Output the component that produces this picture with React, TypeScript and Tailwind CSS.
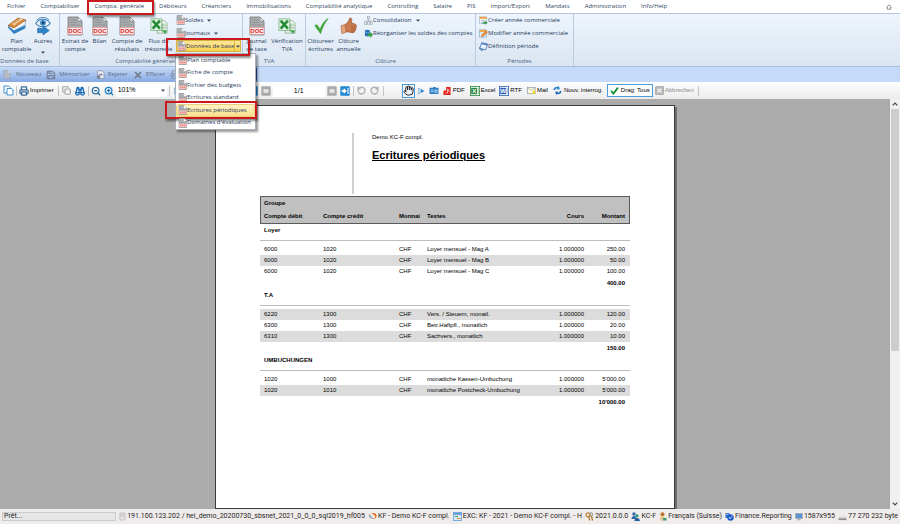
import type { ReactNode } from 'react';
import { Binoculars, Copy, Hand, Printer, RotateCcw, RotateCw, Save, X, ZoomIn, ZoomOut } from 'lucide-react';

const tabs = [
  'Fichier', 'Comptabiliser', 'Compta. générale', 'Débiteurs', 'Créanciers', 'Immobilisations', 'Comptabilité analytique',
  'Controlling', 'Salaire', 'PIS', 'Import/Export', 'Mandats', 'Administration', 'Info/Help',
];

const menuItems = [
  'Plan comptable', 'Fiche de compte', 'Fichier des budgets', 'Ecritures standard', 'Ecritures périodiques', "Domaines d'évaluation",
];

const groups = [
  {
    name: 'Loyer',
    total: '400.00',
    rows: [
      ['6000', '1020', 'CHF', 'Loyer mensuel - Mag A', '1.000000', '250.00'],
      ['6000', '1020', 'CHF', 'Loyer mensuel - Mag B', '1.000000', '50.00'],
      ['6000', '1020', 'CHF', 'Loyer mensuel - Mag C', '1.000000', '100.00'],
    ],
    shaded: 1,
  },
  {
    name: 'T.A',
    total: '150.00',
    rows: [
      ['6220', '1300', 'CHF', 'Vers. / Steuern, monatl.', '1.000000', '120.00'],
      ['6300', '1300', 'CHF', 'Betr.Haftpfl., monatlich', '1.000000', '20.00'],
      ['6310', '1300', 'CHF', 'Sachvers., monatlich', '1.000000', '10.00'],
    ],
    shaded: 0,
  },
  {
    name: 'UMBUCHUNGEN',
    total: "10'000.00",
    rows: [
      ['1020', '1000', 'CHF', 'monatliche Kassen-Umbuchung', '1.000000', "5'000.00"],
      ['1020', '1010', 'CHF', 'monatliche Postcheck-Umbuchung', '1.000000', "5'000.00"],
    ],
    shaded: 1,
  },
];

/* ---------- icons ---------- */

const DocIcon = ({ className = '' }) => (
  <svg viewBox="0 0 20 20" className={`shrink-0 ${className}`}>
    <path d="M3 1h10l4 4v14H3z" fill="#a9abad" stroke="#77797c" strokeWidth=".8" />
    <path d="M13 1v4h4z" fill="#f4f4f4" stroke="#77797c" strokeWidth=".6" />
    <path d="M5 4h6M5 6.500h7M5 9h10" stroke="#8b8d90" strokeWidth=".8" />
    <rect x="3" y="11.500" width="14" height="7" fill="#fdeaea" stroke="#e07070" strokeWidth=".4" />
    <text x="10" y="17.300" textAnchor="middle" fontSize="6" fontWeight="700" fill="#d92b2b" fontFamily="Liberation Sans, sans-serif">DOC</text>
  </svg>
);

const MiniDocIcon = () => (
  <svg viewBox="0 0 9 10" className="h-[10px] w-[9px] shrink-0">
    <path d="M1 .5h5L8.500 3v6.500H1z" fill="#b4b6b8" stroke="#85878a" strokeWidth=".6" />
    <path d="M6 .5V3h2.500z" fill="#fff" />
    <path d="M2 3h3M2 4.500h5" stroke="#8b8d90" strokeWidth=".5" />
    <rect x="1" y="5.800" width="7.500" height="3.200" fill="#f6bdb8" />
    <path d="M2 7.400h5.500" stroke="#e8837c" strokeWidth="1.200" strokeDasharray="1.300 .7" />
  </svg>
);

const SheetIcon = () => (
  <svg viewBox="0 0 20 20" className="size-[18px]">
    <path d="M8 4h8l3 3v11H8z" fill="#e6efe7" stroke="#6fa277" strokeWidth=".7" />
    <path d="M10 9h8M10 12h8M10 15h8M14 7v10" stroke="#74b07c" strokeWidth=".8" />
    <path d="M1 2h12v13H1z" fill="#dff0df" stroke="#4d9a57" strokeWidth=".6" />
    <path d="M3 4l8 9M11 4l-8 9" stroke="#1f8b36" strokeWidth="2.800" />
    <path d="M14 15h5l-2.500 4z" fill="#3aa048" />
  </svg>
);

const ShipIcon = () => (
  <svg viewBox="0 0 20 20" className="size-[20px]">
    <path d="M1 10l6 5L18 8.500l1-4-5 2-12 3z" fill="#f5f8fb" stroke="#6c8db3" strokeWidth=".6" />
    <path d="M1 11.500l6 6.500L18 12.500l1-3.500L7 14.500 1 10z" fill="#2f80c3" />
    <path d="M1 9.500L11 2l8 2-12 8z" fill="#d98b3c" stroke="#8f5520" strokeWidth=".6" />
    <path d="M5 8l8-5.500 3 .8-8.500 5.900z" fill="#f6dcae" />
    <path d="M7 7.500l6-4M9 8.200l6-4" stroke="#b87735" strokeWidth=".6" />
  </svg>
);

const EyeIcon = () => (
  <svg viewBox="0 0 20 20" className="size-[18px]">
    <path d="M2 7c4-6 12-6 16 0-4 5-12 5-16 0z" fill="#f1f7fc" stroke="#3a7fb5" strokeWidth="1.200" />
    <circle cx="10" cy="6.500" r="3.200" fill="#3784bd" />
    <circle cx="10" cy="6.500" r="1.300" fill="#123c66" />
    <path d="M3 3.500C7-.5 13-.5 17 3.500" stroke="#3a7fb5" fill="none" />
    <path d="M4 12.500h6V10l7 5-7 5v-2.500H4z" fill="#2e83c9" stroke="#1c5f9c" strokeWidth=".6" />
  </svg>
);

const CheckIcon = () => (
  <svg viewBox="0 0 20 20" className="size-[18px]">
    <path d="M3 9.500l2.500-1L9 13.500C11 8 14 4 18 1.500 14 7 11.500 12 9.500 18.500z" fill="#3fae3a" stroke="#2a8429" strokeWidth=".5" />
  </svg>
);

const ThumbIcon = () => (
  <svg viewBox="0 0 20 20" className="size-[18px]">
    <path d="M5 9l4-3.500 2-4.500c2.500 0 2.500 2.500 1.500 5.500L17 8c2 .8 1.500 2.500.6 3 .8 1 .2 2.300-.6 2.500.5 1.200 0 2.200-1 2.300 0 1.300-.8 1.900-2 1.700L6 16z" fill="#c97a4e" stroke="#8e4a28" strokeWidth=".7" />
    <path d="M1 9.500L5.500 8.500 7 17l-5 1.500z" fill="#e3a27c" stroke="#9c5a36" strokeWidth=".6" />
    <path d="M12.500 10l4.500 1M12.500 12.700l4 .8M12 15l3.500.7" stroke="#8e4a28" strokeWidth=".6" />
  </svg>
);

const TreeIcon = () => (
  <svg viewBox="0 0 10 10" className="size-[9px] shrink-0" fill="#eceff2" stroke="#9aa3ad" strokeWidth=".7">
    <path d="M5 3v3M2 7V5.500h6V7" fill="none" />
    <rect x="3.700" y=".6" width="2.600" height="2.600" />
    <rect x=".6" y="6.600" width="2.400" height="2.600" />
    <rect x="3.800" y="6.600" width="2.400" height="2.600" />
    <rect x="7" y="6.600" width="2.400" height="2.600" />
  </svg>
);

const DatabaseArrowIcon = () => (
  <svg viewBox="0 0 10 10" className="size-[9px] shrink-0">
    <path d="M1 1.500c1.500-1 4-1 5.500 0v6c-1.500 1-4 1-5.500 0z" fill="#2873b8" />
    <path d="M1.500 3.500c1 .6 3 .6 4.500 0" stroke="#8fc2ec" strokeWidth=".6" fill="none" />
    <path d="M4 5h3V3l3 3.500L7 10V8H4z" fill="#35a04a" />
  </svg>
);

const CalendarIcon = ({ accent = '#3a9a48' }) => (
  <svg viewBox="0 0 10 10" className="size-[9px] shrink-0">
    <rect x=".7" y="1" width="7.600" height="7.500" fill="#fff" stroke="#8ba6c6" strokeWidth=".6" />
    <rect x=".7" y="1" width="7.600" height="2.200" fill="#f2a13c" />
    <path d="M2 5h5M2 6.800h5" stroke="#7e9cc0" strokeWidth=".7" />
    <path d="M4 7h2.500V5.200L9.800 7.500 6.500 9.800V8.500H4z" fill={accent} />
  </svg>
);

const EditCalendarIcon = () => (
  <svg viewBox="0 0 10 10" className="size-[9px] shrink-0">
    <rect x=".7" y="1" width="7.600" height="8" fill="#dcebfa" stroke="#6f9bd0" strokeWidth=".6" />
    <rect x=".7" y="1" width="7.600" height="2.200" fill="#f2a13c" />
    <path d="M2.500 8.500l1-2.500L8 2l1.500 1.500L5 7.800z" fill="#e88a2c" stroke="#b9621a" strokeWidth=".4" />
  </svg>
);

const PeriodIcon = () => (
  <svg viewBox="0 0 10 10" className="size-[9px] shrink-0">
    <path d="M3 .7l6.500 1.500-2 6.500L.8 7z" fill="#e8f1fc" stroke="#3f6db2" strokeWidth=".9" />
    <path d="M3.300 1l6 1.300-.4 1.500-6-1.300z" fill="#4f80c8" />
    <path d="M.5 6c0 2 1.500 3.500 3.500 3.500L3.700 8" stroke="#2c58a8" fill="none" strokeWidth=".9" />
  </svg>
);

const PageIcon = () => (
  <svg viewBox="0 0 9 10" className="h-[9px] w-[8px]">
    <path d="M1 .5h5L8 2.800V9.500H1z" fill="#b6bcc6" stroke="#8f97a3" strokeWidth=".6" />
    <path d="M6 .5v2.300h2z" fill="#fff" />
  </svg>
);

const PagesIcon = () => (
  <svg viewBox="0 0 11 11" className="size-[11px]" fill="#fff" stroke="#2e86d0" strokeWidth=".9">
    <path d="M1 1h4.500L7 2.500V8H1z" />
    <path d="M4 3.500h4.500L10 5v5H4z" />
  </svg>
);

const RejectIcon = () => (
  <svg viewBox="0 0 10 10" className="size-[10px]">
    <path d="M2.500.8h5L9 2.500v6H2.500z" fill="#e7eaf0" stroke="#858d9b" strokeWidth=".7" />
    <path d="M7.500 4C5 3.500 3 4.500 3 6.500H1l2.600 2.800L6 6.500H4.500c0-1 1-1.600 3-1.200z" fill="#7b8494" />
  </svg>
);

/* page navigation; the inactive ones only show a pale frame */
const NavIcon = ({ active = false, last = false }) => (
  <svg viewBox="0 0 10 10" className="size-[10px]">
    <rect x=".3" y=".3" width="9.400" height="9.400" rx=".8" fill={active ? '#1f86d1' : '#a9a9a9'} />
    {active ? (
      <path d="M1.800 3.800h2V2l3 3-3 3V6.200h-2z" fill="#fff" />
    ) : (
      <path d="M2.500 3.200h5v3.600h-5z" fill="#e6e6e6" />
    )}
    {last && <path d="M8 2v6" stroke="#fff" strokeWidth="1.100" />}
  </svg>
);

const OfficeIcon = ({ letter, color }: { letter: string; color: string }) => (
  <svg viewBox="0 0 10 10" className="size-[10px]">
    <rect x=".4" y=".4" width="9.200" height="9.200" fill="#fff" stroke={color} strokeWidth=".8" />
    <rect x="1.200" y="1.800" width="6" height="6.400" fill={color} />
    <path d="M8 3h1M8 5h1M8 7h1" stroke={color} strokeWidth=".7" />
    <text x="4.200" y="7.200" textAnchor="middle" fontSize="6" fontWeight="700" fill="#fff" fontFamily="Liberation Sans, sans-serif">{letter}</text>
  </svg>
);

const PdfIcon = () => (
  <svg viewBox="0 0 9 10" className="h-[10px] w-[8px]">
    <path d="M3.500.5h5v9h-5z" fill="#e3211c" />
    <path d="M.5 4.500h4v5h-4z" fill="#e3211c" />
    <path d="M5.300 2v6M2.500 8c2-1 3.500-3 3.200-5 .6 2 1.300 3 2.300 3.500" stroke="#fff" strokeWidth=".6" fill="none" />
  </svg>
);

const PlayIcon = () => (
  <svg viewBox="0 0 9 10" className="h-[10px] w-[8px]">
    <path d="M1 2h2M2 2v6M1 8h2" stroke="#4c94cf" strokeWidth=".8" />
    <path d="M4 2.500L8.500 5 4 7.500z" fill="#2f86d0" />
  </svg>
);

const CameraIcon = () => (
  <svg viewBox="0 0 11 10" className="h-[9px] w-[10px]">
    <path d="M.5 2h4v-1h3v1h3v7H.5z" fill="#2e80c8" />
    <path d="M2 4.500h3M2 6h3M6.500 4.500h2.500v2.500H6.500z" stroke="#d8ebfa" strokeWidth=".8" fill="none" />
  </svg>
);

const MailIcon = () => (
  <svg viewBox="0 0 10 10" className="size-[9px]">
    <rect x=".5" y="1.500" width="8.500" height="7" fill="#fffbe0" stroke="#8f9aa8" strokeWidth=".8" />
    <path d="M5 8.500L9 4v4.500z" fill="#f3d21f" />
    <path d="M1 2l3.800 3L8.800 2" stroke="#8f9aa8" strokeWidth=".7" fill="none" />
  </svg>
);

const RefreshIcon = () => (
  <svg viewBox="0 0 10 10" className="size-[9px]">
    <path d="M.5 4.500C.5 2 3 .5 5.500 1L6.500 0l1 3.500-3.500.3 1-1.300C3.500 2 2.500 3 2.500 4.500z" fill="#1f7fd0" />
    <path d="M9.500 5.500c0 2.500-2.500 4-5 3.500l-1 1-1-3.500L6 6.200 5 7.500c1.500.5 2.500-.5 2.500-2z" fill="#1565b0" />
  </svg>
);

const TickIcon = () => (
  <svg viewBox="0 0 10 10" className="size-[9px]">
    <path d="M1.200 5.500L3.800 8.500 8.800 1.800" stroke="#16913a" strokeWidth="2" fill="none" />
  </svg>
);

const CancelIcon = () => (
  <svg viewBox="0 0 10 10" className="size-[9px]">
    <rect x=".5" y=".5" width="9" height="9" rx="1" fill="#b9b9b9" stroke="#8e8e8e" strokeWidth=".6" />
    <path d="M2.800 2.800l4.400 4.400M7.200 2.800L2.800 7.200" stroke="#fff" strokeWidth="1.200" />
  </svg>
);

const ServerIcon = () => (
  <svg viewBox="0 0 8 9" className="h-[9px] w-[7px] shrink-0">
    <rect x="1" y=".5" width="6" height="8" rx=".8" fill="#e4e4e4" stroke="#9d9d9d" strokeWidth=".6" />
    <path d="M2 2.500h4M2 4h4" stroke="#a8a8a8" strokeWidth=".6" />
  </svg>
);

const SwirlIcon = () => (
  <svg viewBox="0 0 10 9" className="h-[9px] w-[9px] shrink-0">
    <path d="M.5 2c.5 4 4 6 7 4.500-2 .2-4-1-4.500-3.500z" fill="#8d9aa8" />
    <path d="M3.500 1.500c3-2 6.500 0 6 3-.4 2.300-3 3.300-4.500 2.500 2.500 0 3.300-1.600 2.800-3C7.300 2.500 5.500 2 3.500 1.500z" fill="#e06a1c" />
  </svg>
);

const LedgerIcon = () => (
  <svg viewBox="0 0 9 9" className="size-[9px] shrink-0">
    <rect x=".5" y=".5" width="8" height="8" fill="#dcecfb" stroke="#5b9bd8" strokeWidth=".8" />
    <path d="M.8 2h7.400" stroke="#3d85cc" strokeWidth="1.400" />
    <path d="M2 4.500h3" stroke="#3a9c48" />
    <path d="M4 6.500h3.500" stroke="#e58a2b" />
  </svg>
);

const KeysIcon = () => (
  <svg viewBox="0 0 9 9" className="size-[9px] shrink-0">
    <circle cx="3" cy="2.800" r="2" fill="none" stroke="#c48a2a" strokeWidth="1.300" />
    <circle cx="6" cy="2.500" r="1.700" fill="none" stroke="#8c8c8c" />
    <path d="M3.500 4.500L5 8.500M6.500 4l1 4.500" stroke="#a87524" strokeWidth="1.200" />
  </svg>
);

const UsersIcon = () => (
  <svg viewBox="0 0 9 9" className="size-[9px] shrink-0">
    <circle cx="3" cy="2" r="1.700" fill="#2d69a8" />
    <path d="M.5 7c0-4 5-4 5 0z" fill="#2d69a8" />
    <circle cx="6" cy="3.800" r="1.500" fill="#1c8a6c" />
    <path d="M3.500 9c0-4 5.300-4 5.300 0z" fill="#1f5c9c" />
  </svg>
);

const FlagUserIcon = () => (
  <svg viewBox="0 0 8 9" className="h-[9px] w-[8px] shrink-0">
    <circle cx="3.500" cy="2.200" r="2" fill="#b9772e" />
    <path d="M1 8.500V5l2.500-1L6 5v3.500z" fill="#e9c894" />
    <path d="M4 6h3.500v2.500H4z" fill="#3c9d7a" />
  </svg>
);

const ReportIcon = () => (
  <svg viewBox="0 0 9 9" className="size-[9px] shrink-0">
    <path d="M.5 1h4v5h-4z" fill="#2f6fd0" />
    <circle cx="5.500" cy="5.500" r="3.200" fill="#1d58c4" />
    <path d="M4 5l1 2 2.500-3.500" stroke="#bcd6ff" fill="none" strokeWidth=".9" />
    <path d="M1.500 2.300h1.800" stroke="#fff" strokeWidth=".8" />
  </svg>
);

const MonitorIcon = () => (
  <svg viewBox="0 0 9 9" className="size-[8px] shrink-0">
    <rect x=".8" y=".5" width="7.400" height="5.500" fill="#5c93d2" stroke="#9aa4b1" strokeWidth=".8" />
    <path d="M3.500 6h2v1.200h1.500v1H2v-1h1.500z" fill="#a6adb7" />
  </svg>
);

const DriveIcon = () => (
  <svg viewBox="0 0 10 9" className="h-[8px] w-[9px] shrink-0">
    <path d="M2 3.500h6l1.500 2.500h-9z" fill="#dadada" />
    <path d="M.5 6h9v2h-9z" fill="#8a8a8a" />
  </svg>
);

/* ---------- ribbon ---------- */

const Caret = ({ className = '' }) => (
  <svg viewBox="0 0 4 3" className={`h-[3px] w-[4px] shrink-0 ${className}`}>
    <path d="M0 .5h4L2 2.800z" fill="#33475f" />
  </svg>
);

const RibbonGroup = ({ label, className, children }: { label: string; className: string; children: ReactNode }) => (
  <section className={`flex shrink-0 flex-col border-r border-[#b9cbe0] ${className}`}>
    <div className="flex flex-1">{children}</div>
    <h2 className="h-[10px] whitespace-nowrap pr-[10px] text-center leading-[10px] text-[#3f5f86]">{label}</h2>
  </section>
);

const BigButton = ({ icon, lines, caret, className }: { icon: ReactNode; lines: string[]; caret?: boolean; className: string }) => (
  <button className={`flex shrink-0 flex-col items-center pt-[2px] leading-[8px] ${className}`}>
    <span className="mb-[2px] flex h-[19px] items-center">{icon}</span>
    {lines.map((line) => <span key={line} className="whitespace-nowrap">{line}</span>)}
    {caret && <Caret className="mt-[6px]" />}
  </button>
);

const SmallButton = ({ icon, label, caret }: { icon: ReactNode; label: string; caret?: boolean }) => (
  <button className="flex h-[12px] items-center whitespace-nowrap">
    {icon}
    {label}
    {caret && <Caret className="ml-[4px]" />}
  </button>
);

const Marker = ({ className }: { className: string }) => (
  <div className={`pointer-events-none absolute border-2 border-[#c8191c] shadow-[1px_2px_2px_rgba(0,0,0,0.45)] ${className}`} />
);

const BaseDataMenu = () => (
  <div className="relative z-10 h-[12px] w-[65px]">
    <button className="flex h-full w-full items-center border border-[#d9b23c] bg-linear-to-b from-[#fde79a] to-[#fbd34f] whitespace-nowrap" aria-expanded="true">
      <MiniDocIcon />
      Données de base
      <span className="ml-auto flex h-full items-center border-l border-[#d9b23c] px-[1px]"><Caret /></span>
    </button>
    <ul className="absolute top-[13px] -left-px grid h-[77px] w-[81px] grid-rows-6 border border-[#a8b0ba] bg-white shadow-[2px_2px_2px_rgba(0,0,0,0.4)]">
      {menuItems.map((item) => {
        const selected = item === 'Ecritures périodiques';
        return (
          <li key={item} className="relative flex">
            <button className={`flex w-full items-center whitespace-nowrap pl-px ${selected ? 'rounded-xs border border-[#ecd078] bg-linear-to-b from-[#fff3c6] to-[#fbe08a]' : 'border border-transparent'}`}>
              <MiniDocIcon />
              {item}
            </button>
            {selected && <Marker className="-top-[3px] -left-[11px] h-[18px] w-[92px]" />}
          </li>
        );
      })}
    </ul>
    <Marker className="-top-[2px] -left-[10px] h-[18px] w-[84px]" />
  </div>
);

const Ribbon = () => (
  <div className="relative z-20 flex h-[53px] shrink-0 border-b border-[#a9c1e0] bg-linear-to-b from-[#eef5fd] to-[#dae5f1] text-[6px] text-[#1e395b]">
    <RibbonGroup label="Données de base" className="w-[60px]">
      <BigButton className="w-[33px]" icon={<ShipIcon />} lines={['Plan', 'comptable']} />
      <BigButton className="w-[20px]" icon={<EyeIcon />} lines={['Autres']} caret />
    </RibbonGroup>
    <RibbonGroup label="Comptabilité générale" className="w-[183px]">
      <BigButton className="w-[30px]" icon={<DocIcon className="size-[20px]" />} lines={['Extrait de', 'compte']} />
      <BigButton className="w-[19px]" icon={<DocIcon className="size-[20px]" />} lines={['Bilan']} />
      <BigButton className="w-[36px]" icon={<DocIcon className="size-[20px]" />} lines={['Compte de', 'résultats']} />
      <BigButton className="w-[27px]" icon={<SheetIcon />} lines={['Flux de', 'trésorerie']} />
      <div className="ml-[4px] flex flex-col gap-px">
        <SmallButton icon={<MiniDocIcon />} label="Soldes" caret />
        <SmallButton icon={<MiniDocIcon />} label="Journaux" caret />
        <BaseDataMenu />
      </div>
    </RibbonGroup>
    <RibbonGroup label="TVA" className="w-[63px]">
      <BigButton className="w-[27px]" icon={<DocIcon className="size-[20px]" />} lines={['Journal', 'de taxe']} />
      <BigButton className="w-[34px]" icon={<SheetIcon />} lines={['Vérification', 'TVA']} />
    </RibbonGroup>
    <RibbonGroup label="Clôture" className="w-[170px]">
      <BigButton className="w-[29px]" icon={<CheckIcon />} lines={['Clôtureer', 'écritures']} />
      <BigButton className="w-[27px]" icon={<ThumbIcon />} lines={['Clôture', 'annuelle']} />
      <div className="ml-[2px] flex flex-col gap-px">
        <SmallButton icon={<TreeIcon />} label="Consolidation" caret />
        <SmallButton icon={<DatabaseArrowIcon />} label="Réorganiser les soldes des comptes" />
      </div>
    </RibbonGroup>
    <RibbonGroup label="Périodes" className="w-[98px]">
      <div className="ml-[3px] flex flex-col gap-px">
        <SmallButton icon={<CalendarIcon />} label="Créer année commerciale" />
        <SmallButton icon={<EditCalendarIcon />} label="Modifier année commerciale" />
        <SmallButton icon={<PeriodIcon />} label="Définition période" />
      </div>
    </RibbonGroup>
  </div>
);

/* ---------- toolbars ---------- */

const Tool = ({ icon, label, className = '' }: { icon: ReactNode; label?: string; className?: string }) => (
  <button className={`flex shrink-0 items-center whitespace-nowrap ${className}`} aria-label={label ? undefined : 'Outil'}>
    {icon}
    {label}
  </button>
);

const Separator = ({ className = '' }) => <span className={`h-[10px] w-px shrink-0 bg-[#c4c4c4] ${className}`} />;

const EditBar = () => (
  <div className="flex h-[15px] shrink-0 bg-[#c4daf8]">
    <div className="flex w-[257px] items-center gap-[5px] rounded-r-xs border-r-4 border-[#1c4fa5] bg-linear-to-b from-[#c8dbf8] to-[#86a9e2] pl-[3px] font-['Open_Sans',sans-serif] text-[6px] text-[#606d86]">
      <Tool icon={<PageIcon />} label="Nouveau" className="gap-[5px]" />
      <Tool icon={<Save size={10} strokeWidth={2.5} color="#6f7a8c" />} label="Mémoriser" className="gap-[3px]" />
      <Tool icon={<RejectIcon />} label="Rejeter" className="gap-[3px]" />
      <Tool icon={<X size={10} strokeWidth={4} color="#6f7888" />} label="Effacer" className="gap-[3px]" />
      <Tool icon={<Printer size={9} color="#7b8494" />} />
    </div>
  </div>
);

const ReportBar = () => (
  <div className="flex h-[17px] shrink-0 items-center bg-linear-to-b from-[#fdfdfd] to-[#ececec] pl-[3px] font-['Liberation_Sans',sans-serif] text-[6px] text-black">
    <Tool icon={<PagesIcon />} />
    <Separator className="ml-[2px]" />
    <Tool icon={<Printer size={10} strokeWidth={3} color="#3c6c9c" />} label="Imprimer" className="ml-[2px] gap-px" />
    <Separator className="ml-[4px]" />
    <Tool icon={<Copy size={9} strokeWidth={3} color="#a2a2a2" />} className="ml-[3px]" />
    <Tool icon={<Binoculars size={10} strokeWidth={3} color="#1e6fb8" />} className="ml-[4px]" />
    <Separator className="ml-[3px]" />
    <Tool icon={<ZoomOut size={10} strokeWidth={3} color="#2b6f9e" />} className="ml-[2px]" />
    <Tool icon={<ZoomIn size={10} strokeWidth={3} color="#1f7dc0" />} className="ml-[3px]" />
    <span className="relative ml-[2px] flex h-[13px] items-center bg-white">
      <select aria-label="Zoom" className="h-full w-[51px] appearance-none pl-[2px] text-[7px]" defaultValue="101">
        <option value="101">101%</option>
        <option value="150">150%</option>
      </select>
      <Caret className="pointer-events-none absolute right-[2px]" />
    </span>
    <Separator className="ml-[2px]" />
    <div className="flex w-[88px] shrink-0 items-center pl-[3px]">
      <Tool icon={<PlayIcon />} />
      <Tool icon={<NavIcon active />} className="ml-auto" />
    </div>
    <Tool icon={<NavIcon />} className="ml-[3px]" />
    <input aria-label="Page" defaultValue="1/1" className="ml-[2px] h-[12px] w-[52px] bg-white text-center text-[7px]" />
    <Tool icon={<NavIcon />} className="ml-[2px]" />
    <Tool icon={<NavIcon active last />} className="ml-[3px]" />
    <Separator className="ml-[3px]" />
    <Tool icon={<RotateCcw size={9} strokeWidth={4} color="#b3b3b3" />} className="ml-[3px]" />
    <Tool icon={<RotateCw size={9} strokeWidth={4} color="#b3b3b3" />} className="ml-[4px]" />
    <Separator className="ml-[4px]" />
    <Tool icon={<Hand size={11} color="#111" />} className="ml-[18px] h-[14px] border border-[#4b9bdc] bg-[#eef6fd]" />
    <Tool icon={<PlayIcon />} className="ml-[2px]" />
    <Tool icon={<CameraIcon />} className="ml-[4px]" />
    <Tool icon={<PdfIcon />} label="PDF" className="ml-[4px] gap-[2px]" />
    <Tool icon={<OfficeIcon letter="X" color="#2c8740" />} label="Excel" className="ml-[5px] gap-px" />
    <Tool icon={<OfficeIcon letter="W" color="#2f62b5" />} label="RTF" className="ml-[4px] gap-px" />
    <Tool icon={<MailIcon />} label="Mail" className="ml-[5px] gap-px" />
    <Tool icon={<RefreshIcon />} label="Nouv. interrog." className="ml-[5px] gap-[2px]" />
    <Tool icon={<TickIcon />} label="Drag: Tous" className="ml-[4px] h-[13px] gap-[2px] border border-[#4b9bdc] bg-white px-[2px]" />
    <Tool icon={<CancelIcon />} label="Abbrechen" className="ml-[2px] gap-px text-[#8a8a8a]" />
    <Separator className="ml-[4px]" />
  </div>
);

/* ---------- report ---------- */

const Report = () => (
  <article className="mt-[6px] w-[460px] shrink-0 border border-[#3a3a3a] bg-white px-[44px] font-['Liberation_Sans',sans-serif] text-[6px] text-black shadow-[2px_2px_0_#6d6d6d]">
    <header className="mt-[27px] ml-[92px] h-[61px] border-l-2 border-[#cfcfcf] pl-[18px]">
      <p className="leading-[8px]">Demo KC-F compl.</p>
      <h1 className="mt-[8px] text-[11px] leading-[13px] font-bold underline">Ecritures périodiques</h1>
    </header>
    <table className="mt-[2px] w-full table-fixed border-separate border-spacing-0">
      <colgroup>
        <col className="w-[63px]" />
        <col className="w-[76px]" />
        <col className="w-[28px]" />
        <col />
        <col className="w-[46px]" />
        <col className="w-[46px]" />
      </colgroup>
      <thead className="bg-[#c0c0c0] text-left">
        <tr className="h-[14px]">
          <th colSpan={6} className="border border-b-0 border-[#5a5a5a] pl-[3px]">Groupe</th>
        </tr>
        <tr className="h-[14px]">
          <th className="border-b border-l border-[#5a5a5a] pl-[3px]">Compte débit</th>
          <th className="border-b border-[#5a5a5a]">Compte crédit</th>
          <th className="border-b border-[#5a5a5a]">Monnai</th>
          <th className="border-b border-[#5a5a5a]">Textes</th>
          <th className="border-b border-[#5a5a5a] text-right">Cours</th>
          <th className="border-r border-b border-[#5a5a5a] pr-[4px] text-right">Montant</th>
        </tr>
      </thead>
      {groups.map((group) => (
        <tbody key={group.name}>
          <tr>
            <th colSpan={6} className="h-[20px] p-0 pb-[3px] text-left">
              <div className="h-[17px] border-b border-[#bdbdbd] pl-[4px] leading-[13px]">{group.name}</div>
            </th>
          </tr>
          {group.rows.map((row, i) => (
            <tr key={row[3]} className={`h-[11px] leading-[9px] ${i % 2 === group.shaded ? 'bg-[#dcdcdc]' : ''}`}>
              <td className="pl-[4px]">{row[0]}</td>
              <td>{row[1]}</td>
              <td>{row[2]}</td>
              <td className="whitespace-nowrap">{row[3]}</td>
              <td className="text-right">{row[4]}</td>
              <td className="pr-[5px] text-right">{row[5]}</td>
            </tr>
          ))}
          <tr className="h-[12px]">
            <td colSpan={6} className="pr-[5px] text-right leading-[10px] font-bold">{group.total}</td>
          </tr>
        </tbody>
      ))}
    </table>
  </article>
);

const ScrollBar = () => (
  <div className="flex w-[10px] shrink-0 flex-col bg-[#f0f0f0]">
    <button aria-label="Haut" className="flex h-[10px] items-center justify-center">
      <svg viewBox="0 0 6 4" className="h-[4px] w-[6px]"><path d="M.7 3.300L3 1l2.300 2.300" stroke="#444" strokeWidth="1.200" fill="none" /></svg>
    </button>
    <div className="flex flex-1 flex-col px-px">
      <div className="h-[62%] bg-[#cdcdcd]" />
    </div>
    <button aria-label="Bas" className="flex h-[10px] items-center justify-center">
      <svg viewBox="0 0 6 4" className="h-[4px] w-[6px]"><path d="M.7.7L3 3 5.300.7" stroke="#444" strokeWidth="1.200" fill="none" /></svg>
    </button>
  </div>
);

const statusItems = [
  { icon: <ServerIcon />, text: '191.100.123.202 / hei_demo_20200730_sbsnet_2021_0_0_0_sql2019_hf005' },
  { icon: <SwirlIcon />, text: 'KF - Demo KC-F compl.' },
  { icon: <LedgerIcon />, text: 'EXC: KF - 2021 - Demo KC-F compl. - H' },
  { icon: <KeysIcon />, text: '2021.0.0.0' },
  { icon: <UsersIcon />, text: 'KC-F' },
  { icon: <FlagUserIcon />, text: 'Français (Suisse)' },
  { icon: <ReportIcon />, text: 'Finance.Reporting' },
  { icon: <MonitorIcon />, text: '1587x955' },
  { icon: <DriveIcon />, text: '77 270 232 byte' },
];

const StatusBar = () => (
  <footer className="flex h-[15px] shrink-0 items-center justify-between bg-[#f0eceb] px-[2px] font-['Roboto',sans-serif] text-[7px] text-[#1f1f1f]">
    <div className="h-[9px] w-[114px] border border-[#cccccc] bg-[#e6e6e6] pl-px leading-[7px]">Prêt...</div>
    {statusItems.map(({ icon, text }) => (
      <span key={text} className="flex items-center gap-px whitespace-nowrap">
        {icon}
        {text}
      </span>
    ))}
  </footer>
);

const App = () => (
  <div className="flex h-screen flex-col overflow-hidden bg-white font-['Open_Sans',sans-serif]">
    <nav className="relative z-30 flex h-[14px] shrink-0 items-center gap-[15px] border-b border-[#b5c7df] bg-white pl-[7px] text-[6px] text-[#33475f]">
      {tabs.map((tab) => (
        <a key={tab} href="#" className="relative whitespace-nowrap">
          {tab}
          {tab === 'Compta. générale' && <Marker className="-top-[2px] -left-[8px] h-[15px] w-[67px]" />}
        </a>
      ))}
      <button aria-label="Réduire le ruban" className="mr-[8px] ml-auto">
        <svg viewBox="0 0 6 6" className="size-[6px]" fill="none" stroke="#6b6b6b" strokeWidth=".8"><path d="M.7 3L3 .8 5.300 3M1.300 3v2.200h3.400V3" /></svg>
      </button>
    </nav>
    <Ribbon />
    <EditBar />
    <ReportBar />
    <div className="flex min-h-0 flex-1">
      <main className="flex flex-1 justify-center overflow-hidden bg-[#ababab]">
        <Report />
      </main>
      <ScrollBar />
    </div>
    <StatusBar />
  </div>
);

export default App;
